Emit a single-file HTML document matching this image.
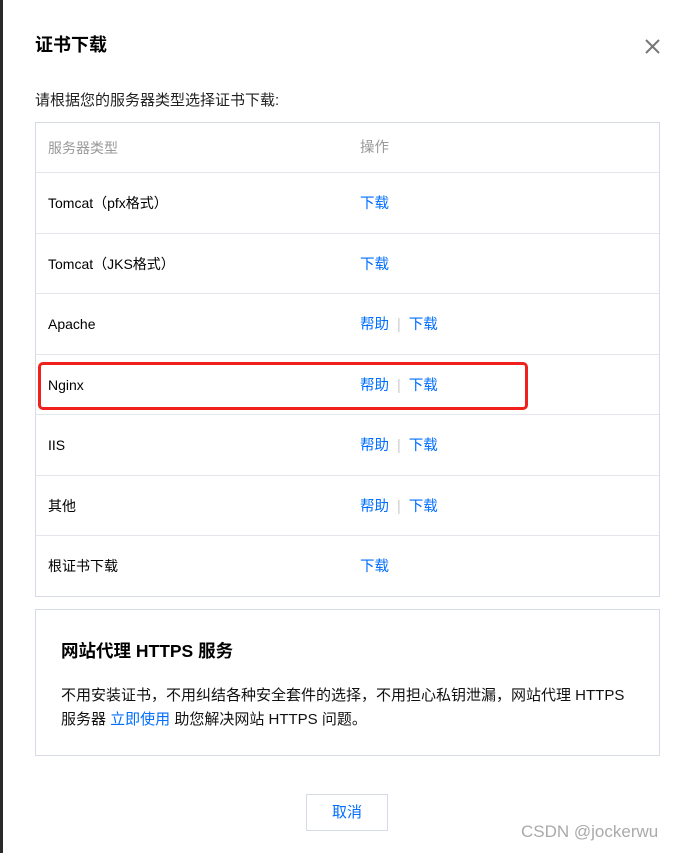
<!DOCTYPE html>
<html><head><meta charset="utf-8"><style>
*{margin:0;padding:0;box-sizing:border-box}
body{width:682px;height:853px;background:#fff;position:relative;overflow:hidden;font-family:"Liberation Sans","Noto Sans CJK SC",sans-serif;color:#000;font-size:15px}
.strip{position:absolute;left:0;top:0;width:3px;height:853px;background:#2a2a2a}
.abs{position:absolute}
.t{left:35px;top:122px;width:625px;height:475px;border:1px solid #d7dbe3;font-size:14px}
.row{position:absolute;left:0;width:623px;border-top:1px solid #e3e6eb}
.c1,.c2{position:absolute;line-height:20px;top:21px}
.c1{left:12px;top:20px}
.c2{left:324px;color:#006eff;font-size:14.5px}
.sep{color:#ccc;margin:0 8px}
a{color:#006eff;text-decoration:none}
</style></head><body>
<div class="strip"></div>
<div class="abs" style="left:35px;top:31px;font-size:18px;font-weight:bold">证书下载</div>
<svg class="abs" style="left:644px;top:38px" width="17" height="17" viewBox="0 0 17 17"><path d="M2 2L15 15M15 2L2 15" stroke="#777" stroke-width="2"/></svg>
<div class="abs" style="left:35px;top:89px;color:#222">请根据您的服务器类型选择证书下载:</div>
<div class="abs t">
 <div class="row" style="top:0;border:none;height:49px;color:#999"><span class="c1" style="top:15px">服务器类型</span><span class="c2" style="top:15px;color:#999">操作</span></div>
 <div class="row" style="top:49px;height:61px"><span class="c1">Tomcat（pfx格式）</span><span class="c2">下载</span></div>
 <div class="row" style="top:110px;height:60px"><span class="c1">Tomcat（JKS格式）</span><span class="c2">下载</span></div>
 <div class="row" style="top:170px;height:61px"><span class="c1">Apache</span><span class="c2">帮助<span class="sep">|</span>下载</span></div>
 <div class="row" style="top:231px;height:60px"><span class="c1">Nginx</span><span class="c2">帮助<span class="sep">|</span>下载</span></div>
 <div class="row" style="top:291px;height:61px"><span class="c1">IIS</span><span class="c2">帮助<span class="sep">|</span>下载</span></div>
 <div class="row" style="top:352px;height:60px"><span class="c1">其他</span><span class="c2">帮助<span class="sep">|</span>下载</span></div>
 <div class="row" style="top:412px;height:61px"><span class="c1">根证书下载</span><span class="c2">下载</span></div>
</div>
<div class="abs" style="left:38px;top:362px;width:490px;height:48px;border:3px solid #f0201c;border-radius:5px"></div>
<div class="abs" style="left:35px;top:609px;width:625px;height:147px;border:1px solid #d7dbe3">
 <div class="abs" style="left:25px;top:28px;font-size:17.5px;font-weight:bold">网站代理 HTTPS 服务</div>
 <div class="abs" style="left:25px;top:74px;line-height:24px;width:595px;color:#111">不用安装证书，不用纠结各种安全套件的选择，不用担心私钥泄漏，网站代理 HTTPS<br>服务器 <a>立即使用</a> 助您解决网站 HTTPS 问题。</div>
</div>
<div class="abs" style="left:306px;top:794px;width:82px;height:37px;border:1px solid #d7dbe3;color:#006eff;text-align:center;line-height:35px">取消</div>
<div class="abs" style="left:521px;top:822px;font-size:17px;color:#aaa">CSDN @jockerwu</div>
</body></html>
